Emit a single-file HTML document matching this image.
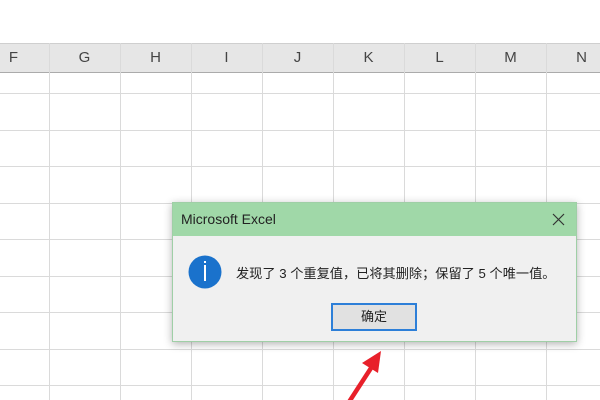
<!DOCTYPE html>
<html><head><meta charset="utf-8"><style>
body{margin:0;width:600px;height:400px;overflow:hidden;background:#fff;position:relative;font-family:"Liberation Sans","Noto Sans CJK SC",sans-serif}
.hdr{position:absolute;left:0;top:43px;width:600px;height:30px;background:#e6e6e6;border-top:1px solid #cfcfcf;border-bottom:1px solid #ababab;box-sizing:border-box}
.col{position:absolute;top:43px;height:30px;line-height:30px;text-align:center;width:71px;font-size:15px;color:#444}
.vl{position:absolute;top:43px;width:1px;height:357px;background:#dadada}
.hl{position:absolute;left:0;width:600px;height:1px;background:#dadada}
</style></head><body>
<div class="hdr"></div>
<div class="col" style="left:-22px">F</div>
<div class="col" style="left:49px">G</div>
<div class="col" style="left:120px">H</div>
<div class="col" style="left:191px">I</div>
<div class="col" style="left:262px">J</div>
<div class="col" style="left:333px">K</div>
<div class="col" style="left:404px">L</div>
<div class="col" style="left:475px">M</div>
<div class="col" style="left:546px">N</div>
<div class="vl" style="left:49px"></div><div class="vl" style="left:120px"></div><div class="vl" style="left:191px"></div><div class="vl" style="left:262px"></div><div class="vl" style="left:333px"></div><div class="vl" style="left:404px"></div><div class="vl" style="left:475px"></div><div class="vl" style="left:546px"></div>
<div class="hl" style="top:93px"></div><div class="hl" style="top:130px"></div><div class="hl" style="top:166px"></div><div class="hl" style="top:203px"></div><div class="hl" style="top:239px"></div><div class="hl" style="top:276px"></div><div class="hl" style="top:312px"></div><div class="hl" style="top:349px"></div><div class="hl" style="top:385px"></div>

<div style="position:absolute;left:172px;top:202px;width:405px;height:140px;background:#f0f0f0;box-shadow:0 2px 8px rgba(0,0,0,.3);border:1px solid #9fcfa6;box-sizing:border-box">
 <div style="height:33px;background:#a0d8a8;position:relative">
  <div style="position:absolute;left:8px;top:8px;font-size:14px;color:#222">Microsoft Excel</div>
  <svg style="position:absolute;left:379px;top:10px" width="13" height="13"><path d="M1 1L12 12M12 1L1 12" stroke="#333" stroke-width="1.2"/></svg>
 </div>
 <svg style="position:absolute;left:15px;top:52px" width="34" height="34"><circle cx="17" cy="17" r="16.5" fill="#1a72cc"/><rect x="16" y="10" width="2" height="16" fill="#fff"/><rect x="16" y="6" width="2" height="2" fill="#fff"/></svg>
 <div style="position:absolute;left:63px;top:60px;font-size:13.2px;color:#222;white-space:nowrap">发现了 3 个重复值，已将其删除；保留了 5 个唯一值。</div>
 <div style="position:absolute;left:158px;top:100px;width:86px;height:28px;box-sizing:border-box;border:2px solid #2d7fd8;background:#e1e1e1;text-align:center;line-height:24px;font-size:13px;color:#222">确定</div>
</div>
<svg style="position:absolute;left:0;top:0" width="600" height="400"><path d="M349 402L373 365" stroke="#e8202a" stroke-width="4.5"/><path d="M381 351L362 363L378 373Z" fill="#e8202a"/></svg>
</body></html>
